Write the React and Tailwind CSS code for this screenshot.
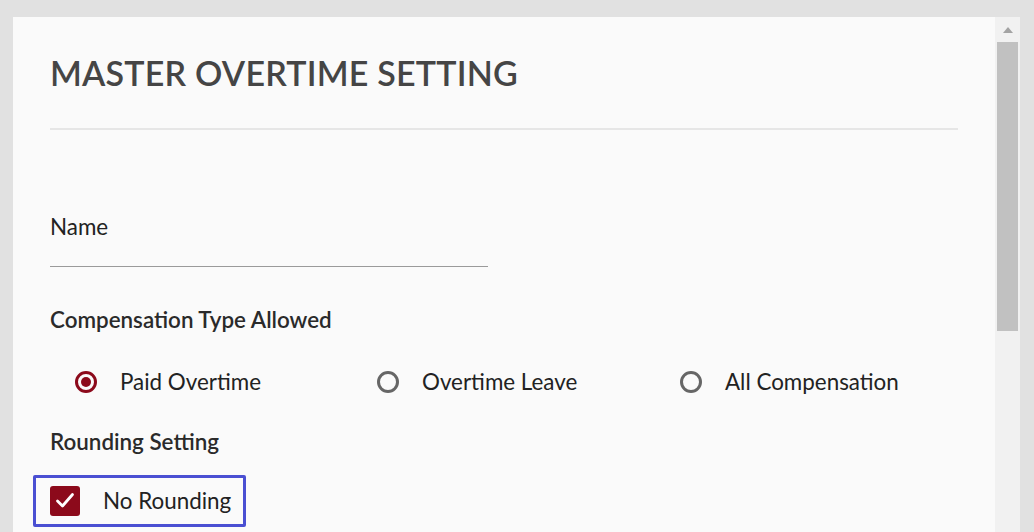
import React, { useState } from 'react';

const Radio = ({ checked, label, onClick }) => (
  <button type="button" onClick={onClick} className="flex items-center gap-[23px] text-left">
    <span
      className={`w-[22px] h-[22px] rounded-full border-[3px] flex items-center justify-center ${
        checked ? 'border-[#8c0a1b]' : 'border-[#666666]'
      }`}
    >
      {checked && <span className="w-[10px] h-[10px] rounded-full bg-[#8c0a1b]" />}
    </span>
    <span className="text-[22.4px] text-[#222222]">{label}</span>
  </button>
);

export default function App() {
  const [comp, setComp] = useState('paid');
  const [noRounding, setNoRounding] = useState(true);

  const options = [
    { id: 'paid', label: 'Paid Overtime' },
    { id: 'leave', label: 'Overtime Leave' },
    { id: 'all', label: 'All Compensation' },
  ];

  return (
    <div
      className="w-[1034px] h-[532px] bg-[#e1e1e1] overflow-hidden pt-[17px] pl-[13px] flex"
      style={{ fontFamily: 'Lato, "Noto Sans", sans-serif' }}
    >
      <div className="flex w-[1007px] h-[515px]">
        {/* Panel */}
        <div className="w-[982px] bg-[#fafafa] pl-[37px] pr-[37px] pt-[34px]">
          <h1 className="text-[34px] font-semibold text-[#454545] tracking-[0.2px] leading-[44px]">
            MASTER OVERTIME SETTING
          </h1>
          <div className="mt-[33px] h-[2px] bg-[#e6e6e6]" />

          <div className="mt-[84px] w-[438px]">
            <label className="block text-[22.4px] text-[#222222] leading-[26px]">Name</label>
            <input className="w-full mt-[3px] bg-transparent outline-none border-b border-[#9a9a9a] h-[24px]" />
          </div>

          <h2 className="mt-[40px] text-[22.4px] font-semibold text-[#2a2a2a] leading-[26px]">
            Compensation Type Allowed
          </h2>

          <div className="mt-[32px] ml-[25px] grid grid-cols-[302px_303px_auto]">
            {options.map((o) => (
              <Radio key={o.id} checked={comp === o.id} label={o.label} onClick={() => setComp(o.id)} />
            ))}
          </div>

          <h2 className="mt-[30px] text-[22.4px] font-semibold text-[#2a2a2a] leading-[26px]">
            Rounding Setting
          </h2>

          <div className="mt-[20px] -ml-[17px] w-[213px] h-[52px] border-[3px] border-[#4a4fd2] rounded-[2px] flex items-center pl-[14px] gap-[23px]">
            <button
              type="button"
              onClick={() => setNoRounding(!noRounding)}
              className={`w-[30px] h-[30px] rounded-[3px] flex items-center justify-center ${
                noRounding ? 'bg-[#8c0a1b]' : 'border-2 border-[#666666]'
              }`}
            >
              {noRounding && (
                <svg width="20" height="17" viewBox="0 0 20 17" fill="none">
                  <path d="M2.5 9 L7.5 14 L17.5 2.5" stroke="white" strokeWidth="2.8" strokeLinecap="round" strokeLinejoin="round" />
                </svg>
              )}
            </button>
            <span className="text-[22.4px] text-[#222222]">No Rounding</span>
          </div>
        </div>

        {/* Scrollbar */}
        <div className="w-[25px] bg-[#f1f1f1] flex flex-col items-center pt-[10px]">
          <div className="w-0 h-0 border-l-[5px] border-r-[5px] border-b-[6px] border-l-transparent border-r-transparent border-b-[#a3a3a3]" />
          <div className="mt-[9px] w-[21px] h-[289px] bg-[#c1c1c1]" />
        </div>
      </div>
    </div>
  );
}
